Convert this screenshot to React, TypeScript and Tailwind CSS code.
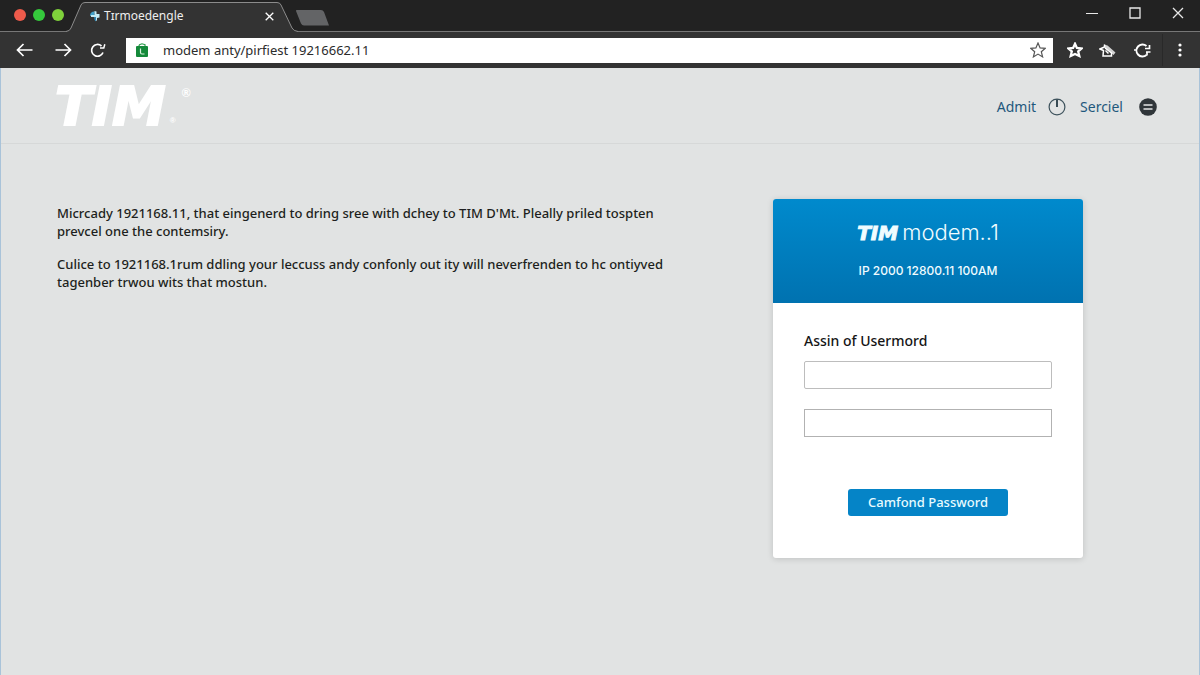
import React from "react";

const sans = "font-['Noto_Sans',sans-serif]";

function TabStrip() {
  return (
    <div className="flex h-8 items-stretch bg-[#222222] shadow-[inset_0_-1px_0_#777777]">
      <div className="flex w-[66px] shrink-0 items-start gap-[7px] pl-[14px] pt-[9px]">
        <button aria-label="Close window" className="size-3 shrink-0 rounded-full bg-[#ee5b4b]" />
        <button aria-label="Minimize window" className="size-3 shrink-0 rounded-full bg-[#35c93c]" />
        <button aria-label="Zoom window" className="size-3 shrink-0 rounded-full bg-[#7fd13b]" />
      </div>
      <div className="relative flex w-[232px] shrink-0 items-center pl-6 pr-6">
        <svg viewBox="0 0 232 32" className="absolute inset-0 h-8 w-[232px]" aria-hidden="true">
          <path d="M0 32V31.500Q4 31 5 28L15 5Q16 2.500 19 2.500H211Q214 2.500 215 5L226 28Q227.500 31 232 31.500V32Z" fill="#333333" />
          <path d="M0 31.500Q4 31 5 28L15 5Q16 2.500 19 2.500H211Q214 2.500 215 5L226 28Q227.500 31 232 31.500" fill="none" stroke="#8c8c8c" />
        </svg>
        <div className="relative flex grow items-center">
          <svg viewBox="0 0 10 12" className="h-3 w-[10px]" aria-hidden="true">
            <path d="M0 6Q0 1.500 4.500 1.500V6Z" fill="#3f9fc8" />
            <path d="M4.500 1L6.500 1.500V4H9.500V7.500L7 8V10.500L5 11V7H1V5H4.500Z" fill="#c4ebf5" />
            <path d="M4 7H6V11.500Q4 10 4 7Z" fill="#2a86b5" />
          </svg>
          <span className={`${sans} ml-1 text-[12px] leading-4 text-[#eeeeee]`}>Tɪrmoedengle</span>
          <button aria-label="Close tab" className="ml-auto text-white">
            <svg viewBox="0 0 9 9" className="size-[9px]" fill="none" stroke="currentColor" strokeWidth="1.300" aria-hidden="true">
              <path d="M.7.7L8.300 8.300M8.300.7L.7 8.300" />
            </svg>
          </button>
        </div>
      </div>
      <button aria-label="New tab" className="ml-[-3px] mt-[10px] h-4 w-[35px] self-start">
        <svg viewBox="0 0 35 16" className="h-4 w-[35px]" aria-hidden="true">
          <path d="M2 0H26Q28 0 29 2L34 15.500H9Q7 15.500 6 13.500L1 1Q.6 0 2 0Z" fill="#636466" />
        </svg>
      </button>
      <div className="ml-auto flex items-start gap-[31px] pr-4 pt-[7px] text-[#e8e8e8]">
        <button aria-label="Minimize">
          <svg viewBox="0 0 12 12" className="size-3" stroke="currentColor" aria-hidden="true"><path d="M0 6.500H12" /></svg>
        </button>
        <button aria-label="Maximize">
          <svg viewBox="0 0 12 12" className="size-3" fill="none" stroke="currentColor" strokeWidth="1.300" aria-hidden="true"><path d="M1 1H11V11H1Z" /></svg>
        </button>
        <button aria-label="Close">
          <svg viewBox="0 0 12 12" className="size-3" fill="none" stroke="currentColor" strokeWidth="1.300" aria-hidden="true"><path d="M1 1L11 11M11 1L1 11" /></svg>
        </button>
      </div>
    </div>
  );
}

function Toolbar() {
  return (
    <div className="flex h-9 items-center bg-[#333333] text-white">
      <div className="flex w-[126px] shrink-0 items-center gap-[22px] pl-4">
        <button aria-label="Back">
          <svg viewBox="0 0 17 14" className="h-[14px] w-[17px]" fill="none" stroke="currentColor" strokeWidth="1.700" aria-hidden="true"><path d="M7.500 1L1.500 7L7.500 13M1.500 7H16.500" /></svg>
        </button>
        <button aria-label="Forward">
          <svg viewBox="0 0 17 14" className="h-[14px] w-[17px]" fill="none" stroke="currentColor" strokeWidth="1.700" aria-hidden="true"><path d="M9.500 1L15.500 7L9.500 13M15.500 7H.5" /></svg>
        </button>
        <button aria-label="Reload" className="-ml-1">
          <svg viewBox="0 0 16 15" className="h-[15px] w-4" fill="none" stroke="currentColor" strokeWidth="1.700" aria-hidden="true"><path d="M11.500 3A5.900 5.900 0 1 0 13 9.500" /><path d="M10 5H13.800L14.800 1.200" strokeWidth="1.500" /></svg>
        </button>
      </div>
      <div className="flex h-[25px] min-w-0 grow items-center bg-white pl-[10px] pr-[7px]">
        <svg viewBox="0 0 12 14" className="h-[14px] w-3 shrink-0" aria-hidden="true">
          <path d="M2.500 4L3.500 1.800L6 .8L9 1.800V4" fill="none" stroke="#2f9e4f" strokeWidth="1.200" />
          <rect x="0" y="3" width="12" height="11" rx="1" fill="#14893a" />
          <path d="M4.500 5.500V9.500Q4.500 11 6 11H8.500" fill="none" stroke="#d8f0dd" strokeWidth="1.200" />
        </svg>
        <input
          aria-label="Address"
          defaultValue="modem anty/pirfiest 19216662.11"
          className={`${sans} ml-[15px] h-6 min-w-0 grow bg-transparent text-[13px] text-[#2b2b2b] outline-none`}
        />
        <button aria-label="Bookmark this page" className="text-[#555555]">
          <svg viewBox="0 0 16 16" className="size-4" fill="none" stroke="currentColor" strokeWidth="1.200" aria-hidden="true"><path d="M8 1L10.100 5.900L15.300 6.300L11.300 9.700L12.600 14.900L8 12.100L3.400 14.900L4.700 9.700L.7 6.300L5.900 5.900Z" /></svg>
        </button>
      </div>
      <div className="flex shrink-0 items-center pl-[14px] pr-[18px]">
        <button aria-label="Bookmarks">
          <svg viewBox="0 0 16 16" className="size-4" fill="none" stroke="currentColor" strokeWidth="2.300" aria-hidden="true"><path d="M8 1.800L9.900 5.900L14.600 6.400L11.200 9.500L12.300 14L8 12L3.700 14L4.800 9.500L1.400 6.400L6.100 5.900Z" /></svg>
        </button>
        <button aria-label="Extension" className="ml-4">
          <svg viewBox="0 0 17 15" className="h-[15px] w-[17px]" aria-hidden="true">
            <path d="M5 1.500L8.500 2.500L16.500 9.500L14.500 12L11 9L6 5Z" fill="#d2d2d2" />
            <path d="M5.500 1.500V4L1 6L4.500 7.500L4 13H12.500V10L6 5" fill="none" stroke="#ffffff" strokeWidth="1.500" />
            <path d="M6.500 7.500L9.500 10.500" stroke="#ffffff" strokeWidth="1.500" />
          </svg>
        </button>
        <button aria-label="Sync" className="ml-[18px]">
          <svg viewBox="0 0 17 15" className="h-[15px] w-[17px]" fill="none" stroke="currentColor" strokeWidth="1.900" aria-hidden="true">
            <path d="M12.500 3A6 6 0 0 0 4 3.500A6 6 0 0 0 4 11.500A6 6 0 0 0 12.500 12" />
            <path d="M0 7H3M11 5.500H15.500V2M12 9H16.500M13 9V12.500" strokeWidth="1.700" />
          </svg>
        </button>
        <span className="ml-[11px] h-8 w-px bg-[#292929]" />
        <button aria-label="Menu" className="ml-[15px]">
          <svg viewBox="0 0 4 14" className="h-[14px] w-1" fill="currentColor" aria-hidden="true"><circle cx="2" cy="2" r="1.600" /><circle cx="2" cy="7" r="1.600" /><circle cx="2" cy="12" r="1.600" /></svg>
        </button>
      </div>
    </div>
  );
}

function SiteHeader() {
  return (
    <header className="flex h-[76px] items-center justify-between border-b border-[#d6d8d8] pl-[54px] pr-[42px] pt-[3px]">
      <a href="#home" className="flex items-center text-white">
        <span className="font-['DejaVu_Sans',sans-serif] text-[54px] font-bold italic leading-[60px] [-webkit-text-stroke:2px_white]">TIM</span>
        <span className="ml-1 flex h-10 flex-col justify-between font-['Liberation_Sans',sans-serif] font-bold leading-3">
          <span className="ml-3 text-[12px]">®</span>
          <span className="text-[8px]">®</span>
        </span>
      </a>
      <nav className={`${sans} flex items-center text-[14px] leading-5 text-[#1f587c]`}>
        <a href="#admit">Admit</a>
        <svg viewBox="0 0 18 18" className="ml-3 size-[18px]" fill="none" aria-hidden="true">
          <circle cx="9" cy="9" r="7.900" stroke="#3d525c" strokeWidth="1.200" />
          <path d="M9 1.500V9" stroke="#263a44" strokeWidth="1.800" />
        </svg>
        <a href="#serciel" className="ml-[14px]">Serciel</a>
        <button aria-label="Menu" className="ml-4">
          <svg viewBox="0 0 18 18" className="size-[18px]" aria-hidden="true">
            <circle cx="9" cy="9" r="8.800" fill="#30363a" />
            <path d="M4.500 7H13.500M4.500 11H13.500" stroke="#e4e6e6" strokeWidth="1.500" />
          </svg>
        </button>
      </nav>
    </header>
  );
}

function LoginCard() {
  return (
    <section className="w-[310px] shrink-0 overflow-hidden rounded-[3px] bg-white shadow-[0_1px_6px_rgba(0,0,0,0.15)]">
      <div className="flex h-[104px] flex-col items-center bg-linear-to-b from-[#008acd] to-[#0072b0] pt-[19px] text-[#f0fcff]">
        <h1 className="flex items-baseline leading-7">
          <span className="font-['DejaVu_Sans',sans-serif] text-[20px] font-bold italic [-webkit-text-stroke:1px_currentColor]">TIM</span>
          <span className="ml-1 font-['Inter',sans-serif] text-[22px] font-light">modem..1</span>
        </h1>
        <p className="mt-4 font-['Inter',sans-serif] text-[12px] font-medium leading-4">IP 2000 12800.11 100AM</p>
      </div>
      <form className={`${sans} flex flex-col px-[31px] pb-[42px] pt-7`} onSubmit={(e) => e.preventDefault()}>
        <label htmlFor="user" className="text-[14px] font-medium leading-5 text-[#151515]">Assin of Usermord</label>
        <input id="user" type="text" className="mt-[10px] h-7 rounded-[2px] border border-[#bdbdbd] bg-white px-2 text-[14px]" />
        <input aria-label="Password" type="password" className="mt-5 h-7 border border-[#b2b2b2] bg-white px-2 text-[14px]" />
        <button type="submit" className="mt-[52px] h-[27px] w-[160px] self-center rounded-[3px] bg-[#0584c7] text-[13px] font-medium text-[#e8fbff]">
          Camfond Password
        </button>
      </form>
    </section>
  );
}

export default function App() {
  return (
    <div className="flex min-h-screen flex-col bg-[#e1e3e3]">
      <TabStrip />
      <Toolbar />
      <div className="flex grow flex-col border-x border-[#a9c3d9]">
        <SiteHeader />
        <main className="flex items-start justify-between gap-8 pb-10 pl-14 pr-[116px] pt-[55px]">
          <div className={`${sans} flex max-w-[660px] flex-col gap-[15px] pt-[5px] text-[13px] font-medium leading-[18px] text-[#1d1f20]`}>
            <p>Micrcady 1921168.11, that eingenerd to dring sree with dchey to TIM D'Mt. Pleally priled tospten<br />prevcel one the contemsiry.</p>
            <p>Culice to 1921168.1rum ddling your leccuss andy confonly out ity will neverfrenden to hc ontiyved<br />tagenber trwou wits that mostun.</p>
          </div>
          <LoginCard />
        </main>
      </div>
    </div>
  );
}
